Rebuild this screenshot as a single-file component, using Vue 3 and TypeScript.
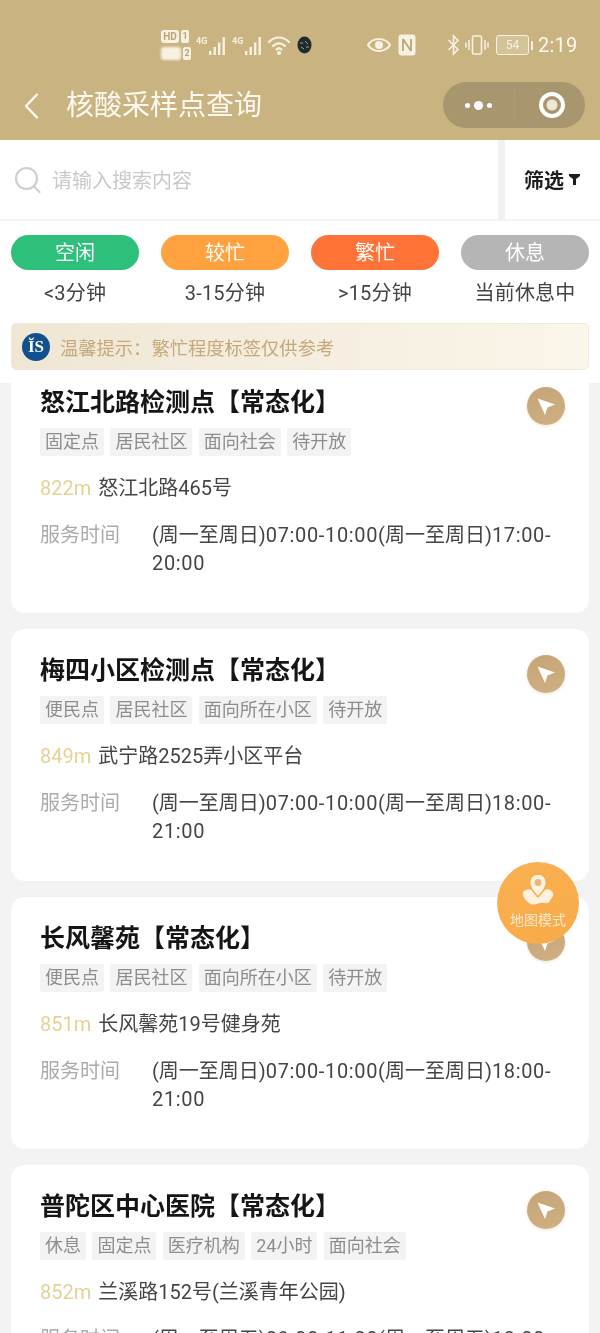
<script setup lang="ts">
interface Slot {
  days: string
  start: string
  end: string
}
interface Site {
  name: string
  tags: string[]
  dist: string
  addr: string
  slots: Slot[]
}
const legend = [
  { label: '空闲', note: '<3分钟', cls: 'free' },
  { label: '较忙', note: '3-15分钟', cls: 'busy' },
  { label: '繁忙', note: '>15分钟', cls: 'full' },
  { label: '休息', note: '当前休息中', cls: 'rest' },
]
const daily = '(周一至周日)'
const weekday = '(周一至周五)'
const sites: Site[] = [
  { name: '怒江北路检测点【常态化】', tags: ['固定点', '居民社区', '面向社会', '待开放'], dist: '822m', addr: '怒江北路465号', slots: [{ days: daily, start: '07:00', end: '10:00' }, { days: daily, start: '17:00', end: '20:00' }] },
  { name: '梅四小区检测点【常态化】', tags: ['便民点', '居民社区', '面向所在小区', '待开放'], dist: '849m', addr: '武宁路2525弄小区平台', slots: [{ days: daily, start: '07:00', end: '10:00' }, { days: daily, start: '18:00', end: '21:00' }] },
  { name: '长风馨苑【常态化】', tags: ['便民点', '居民社区', '面向所在小区', '待开放'], dist: '851m', addr: '长风馨苑19号健身苑', slots: [{ days: daily, start: '07:00', end: '10:00' }, { days: daily, start: '18:00', end: '21:00' }] },
  { name: '普陀区中心医院【常态化】', tags: ['休息', '固定点', '医疗机构', '24小时', '面向社会'], dist: '852m', addr: '兰溪路152号(兰溪青年公园)', slots: [{ days: weekday, start: '09:00', end: '11:00' }, { days: weekday, start: '13:00', end: '16:00' }] },
]
</script>

<template>
  <div class="page">
    <header class="top">
      <div class="status">
        <div class="sim">
          <div class="sim-row"><span class="hd">HD</span><span class="num">1</span></div>
          <div class="sim-row"><span class="hd blur"></span><span class="num">2</span></div>
        </div>
        <div v-for="n in 2" :key="n" class="signal">
          <span class="g4">4G</span>
          <svg width="19" height="20" viewBox="0 0 19 20"><g fill="#f7f1e2"><rect x="1" y="15" width="2.4" height="4"/><rect x="5.5" y="11" width="2.4" height="8"/><rect x="10" y="6.5" width="2.4" height="12.5"/><rect x="14.5" y="1" width="2.4" height="18"/></g></svg>
        </div>
        <svg class="wifi" width="24" height="22" viewBox="0 0 24 22" fill="none" stroke="#f7f1e2" stroke-width="2.2" stroke-linecap="round"><path d="M2 8 C8 2 16 2 22 8"/><path d="M6 12 C9.5 8.5 14.5 8.5 18 12"/><path d="M9.5 15.5 C11 14 13 14 14.5 15.5"/><circle cx="12" cy="19" r="1" fill="#f7f1e2"/></svg>
        <svg class="dark-dot" width="15" height="18" viewBox="0 0 15 18"><ellipse cx="7.5" cy="9" rx="7" ry="8.5" fill="#20292b"/><path d="M3 7h3M8 5l3 3M4 11l3 2M9 11h3" stroke="#8fa5a6" stroke-width="1" fill="none"/></svg>
        <svg class="eye" width="24" height="16" viewBox="0 0 24 16"><path d="M1 8 C6 0 18 0 23 8 C18 16 6 16 1 8Z" fill="none" stroke="#f7f1e2" stroke-width="2.2"/><circle cx="12" cy="8" r="4" fill="#f7f1e2"/></svg>
        <svg class="nfc" width="18" height="22" viewBox="0 0 18 22"><rect x="0.5" y="0.5" width="17" height="21" rx="3" fill="#f7f1e2"/><path d="M5 5V17M13 5V17M5 5L13 17" stroke="#b9a578" stroke-width="1.8" fill="none"/></svg>
        <svg class="bt" width="13" height="22" viewBox="0 0 13 22" fill="none" stroke="#f7f1e2" stroke-width="1.6"><path d="M1.5 6L11 15.5L6.5 20V2L11 6.5L1.5 16"/></svg>
        <svg class="vib" width="24" height="20" viewBox="0 0 24 20" fill="none" stroke="#f7f1e2" stroke-width="1.6"><rect x="7.5" y="1" width="9" height="18" rx="1.5"/><path d="M4 5V15M1 7.5V12.5M20 5V15M23 7.5V12.5"/></svg>
        <div class="battery"><span class="cell">54</span><span class="nub"></span></div>
        <span class="time">2:19</span>
      </div>
      <div class="nav">
        <svg class="back" width="15" height="26" viewBox="0 0 15 26" fill="none" stroke="#fbf8f0" stroke-width="2.4" stroke-linecap="round" stroke-linejoin="round"><path d="M13 1.5L2 13L13 24.5"/></svg>
        <h1 class="title">核酸采样点查询</h1>
        <div class="capsule">
          <div class="dots"><i></i><i class="big"></i><i></i></div>
          <span class="divider"></span>
          <div class="target"><i></i></div>
        </div>
      </div>
    </header>

    <section class="search-bar">
      <div class="search">
        <svg width="27" height="28" viewBox="0 0 27 28" fill="none" stroke="#cfcfcf" stroke-width="2.2" stroke-linecap="round"><circle cx="12.5" cy="12.5" r="10.5"/><path d="M20 20.5L25.5 26"/></svg>
        <span>请输入搜索内容</span>
      </div>
      <div class="filter">
        <b>筛选</b>
        <svg width="11" height="11" viewBox="0 0 11 11"><path d="M0 0H11V2L7 5V11H4V5L0 2Z" fill="#1d1d1d"/></svg>
      </div>
    </section>

    <section class="legend">
      <div v-for="l in legend" :key="l.label" class="legend-item">
        <span class="pill" :class="l.cls">{{ l.label }}</span>
        <span class="note">{{ l.note }}</span>
      </div>
    </section>

    <section class="notice">
      <span class="logo">ĬS</span>
      <span>温馨提示：繁忙程度标签仅供参考</span>
    </section>

    <main class="list">
      <div class="list-inner">
        <article v-for="s in sites" :key="s.name" class="card">
          <div class="head">
            <h2>{{ s.name }}</h2>
            <span class="go">
              <svg width="22" height="22" viewBox="0 0 22 22"><path d="M2.5 3.5L20 9.5L12.5 12.5L10 20Z" fill="#fff"/></svg>
            </span>
          </div>
          <div class="tags"><span v-for="t in s.tags" :key="t">{{ t }}</span></div>
          <div class="addr"><span class="dist">{{ s.dist }}</span><span>{{ s.addr }}</span></div>
          <div class="hours">
            <span class="hl">服务时间</span>
            <span class="hv"><template v-for="(slot, i) in s.slots" :key="i">{{ slot.days }}<span class="clock">{{ slot.start }}-<wbr />{{ slot.end }}</span></template></span>
          </div>
        </article>
      </div>
    </main>

    <button class="map-btn">
      <svg width="34" height="34" viewBox="0 0 34 34">
        <path d="M2 19C6 15 10 16 13 18C16 21 21 20 24 17C27 15 30 17 32 20C33 24 30 25 29 28C27 32 23 29 19 30C15 31 11 33 8 30C6 28 1 25 2 19Z" fill="#fff3df"/>
        <path d="M17 1C12 1 8.5 4.8 8.5 9.5C8.5 15 17 24 17 24S25.5 15 25.5 9.5C25.5 4.8 22 1 17 1Z" fill="#fff3df" stroke="#f9ab48" stroke-width="1.5"/>
        <circle cx="17" cy="9.5" r="3.5" fill="#e8b877"/>
      </svg>
      <span>地图模式</span>
    </button>
  </div>
</template>

<style>
html, body { margin: 0; padding: 0; background: #fff; }
</style>

<style scoped>
.page {
  position: relative;
  width: 600px;
  height: 1333px;
  overflow: hidden;
  display: flex;
  flex-direction: column;
  background: #fff;
  font-family: Roboto, "Noto Sans CJK SC", sans-serif;
  color: #333;
  filter: blur(.4px);
}
.top { height: 140px; background: #c9b381; flex: none; }
.status {
  height: 72px;
  padding: 18px 0 0 161px;
  box-sizing: border-box;
  display: flex;
  align-items: center;
  color: #f7f1e2;
}
.sim { display: flex; flex-direction: column; gap: 4px; width: 35px; }
.sim-row { display: flex; gap: 2px; align-items: center; }
.hd { width: 18px; height: 13px; border-radius: 3px; background: #f7f1e2; color: #b9a578; font-size: 10px; line-height: 13px; font-weight: 700; text-align: center; }
.hd.blur { filter: blur(1px); width: 20px; }
.num { width: 8px; height: 13px; border-radius: 2px; background: #f7f1e2; color: #b9a578; font-size: 9px; line-height: 13px; text-align: center; font-weight: 700; }
.signal { display: flex; align-items: flex-start; width: 36px; }
.g4 { font-size: 9px; line-height: 12px; width: 13px; font-weight: 700; }
.signal svg { margin-left: -1px; margin-top: 1px; }
.wifi { margin-left: -1px; }
.dark-dot { margin-left: 6px; }
.eye { margin-left: 55px; }
.nfc { margin-left: 7px; }
.bt { margin-left: 31px; }
.vib { margin-left: 5px; }
.battery { display: flex; align-items: center; margin-left: 7px; gap: 2px; }
.cell { width: 31px; height: 18px; border: 1.5px solid #f7f1e2; border-radius: 3px; box-sizing: content-box; color: #f7f1e2; font-size: 12px; line-height: 18px; text-align: center; background: rgba(247, 241, 226, .25); }
.nub { width: 2px; height: 9px; background: #f7f1e2; }
.time { margin-left: 5px; font-size: 20px; letter-spacing: .2px; color: #fbf8f0; }
.nav { height: 68px; display: flex; align-items: flex-start; padding-left: 24px; }
.back { margin-top: 21px; flex: none; }
.title { margin: 15px 0 0 27px; font-size: 28px; line-height: 38px; font-weight: 400; color: #fbf8f0; white-space: nowrap; }
.capsule {
  margin: 10px 15px 0 auto;
  width: 142px;
  height: 46px;
  border-radius: 23px;
  background: #a8966e;
  display: flex;
  align-items: center;
}
.dots { width: 71px; display: flex; justify-content: center; align-items: center; gap: 4px; }
.dots i { width: 5px; height: 5px; border-radius: 50%; background: #fff; }
.dots i.big { width: 9px; height: 9px; }
.divider { width: 1px; height: 30px; background: rgba(255, 255, 255, .06); }
.target { flex: 1; display: flex; justify-content: center; padding-left: 3px; }
.target i {
  width: 26px;
  height: 26px;
  box-sizing: border-box;
  border-radius: 50%;
  border: 4px solid #fff;
  background: radial-gradient(circle, #eee7d6 0 5px, #a8966e 6px);
}
.search-bar { height: 81px; flex: none; display: flex; box-sizing: border-box; border-bottom: 2px solid #f4f4f4; background: #fff; }
.search { flex: 1; display: flex; align-items: center; padding-left: 14px; gap: 11px; color: #c9c9c9; font-size: 20px; border-right: 7px solid #f1f1f1; }
.filter { width: 95px; padding-left: 19px; box-sizing: border-box; display: flex; align-items: center; gap: 5px; font-size: 20px; color: #1d1d1d; }
.filter b { font-weight: 700; }
.legend { flex: none; display: grid; grid-template-columns: repeat(4, 128px); gap: 22px; padding: 14px 11px 0; }
.legend-item { display: flex; flex-direction: column; align-items: center; }
.pill { width: 128px; height: 35px; border-radius: 18px; color: #fff; font-size: 20px; line-height: 37px; text-align: center; }
.free { background: #2cc07b; }
.busy { background: #ffa23f; }
.full { background: #ff7339; }
.rest { background: #b5b5b5; }
.note { margin-top: 9px; font-size: 20px; line-height: 28px; color: #444; letter-spacing: .2px; }
.notice {
  flex: none;
  margin: 16px 11px 0;
  height: 47px;
  box-sizing: border-box;
  border-radius: 5px;
  border: 1px solid #f1e8d6;
  background: linear-gradient(90deg, #efe6d4, #fbf6ea);
  display: flex;
  align-items: center;
  padding-left: 10px;
  gap: 10px;
  font-size: 18.3px;
  color: #c5a87b;
}
.logo { width: 28px; height: 28px; border-radius: 50%; background: #12508f; color: #fff; font-family: "Liberation Serif", serif; font-size: 17px; font-weight: 700; line-height: 28px; text-align: center; }
.list { flex: 1; min-height: 0; margin-top: 13px; overflow: hidden; background: #f3f3f3; padding: 0 11px; }
.list-inner { margin-top: -22px; display: flex; flex-direction: column; gap: 16px; }
.card { flex: none; height: 252px; box-sizing: border-box; padding: 28px 24px 0 29px; background: #fff; border-radius: 14px; }
.head { display: flex; justify-content: space-between; height: 38px; }
h2 { margin: 0; font-size: 25px; line-height: 28px; font-weight: 700; color: #151515; white-space: nowrap; }
.go { width: 38px; height: 38px; margin-top: -2px; border-radius: 50%; background: linear-gradient(160deg, #c5a578, #d0af82); box-shadow: 0 1px 3px rgba(201, 169, 124, .35); display: flex; align-items: center; justify-content: center; }
.tags { margin-top: 1px; display: flex; gap: 6.4px; }
.tags span { height: 28px; padding: 0 5px; background: #f3f3f3; color: #8d8d8d; font-size: 18px; line-height: 28px; border-radius: 2px; white-space: nowrap; }
.addr { margin-top: 18px; display: flex; gap: 7px; font-size: 20px; line-height: 28px; color: #444; }
.dist { color: #e5d295; }
.hours { margin-top: 19px; display: flex; font-size: 20px; line-height: 28px; }
.hl { width: 112px; flex: none; color: #ababab; }
.hv { width: 404px; color: #444; }
.clock { letter-spacing: .65px; }
.map-btn {
  position: absolute;
  left: 497px;
  top: 862px;
  width: 82px;
  height: 82px;
  padding: 11px 0 0;
  border: 0;
  border-radius: 50%;
  background: linear-gradient(160deg, #fab052, #f9aa47);
  display: flex;
  flex-direction: column;
  align-items: center;
  color: #fde8cc;
  font-family: inherit;
  font-size: 14px;
  line-height: 18px;
}
.map-btn svg { margin-bottom: 4px; flex: none; }
</style>
